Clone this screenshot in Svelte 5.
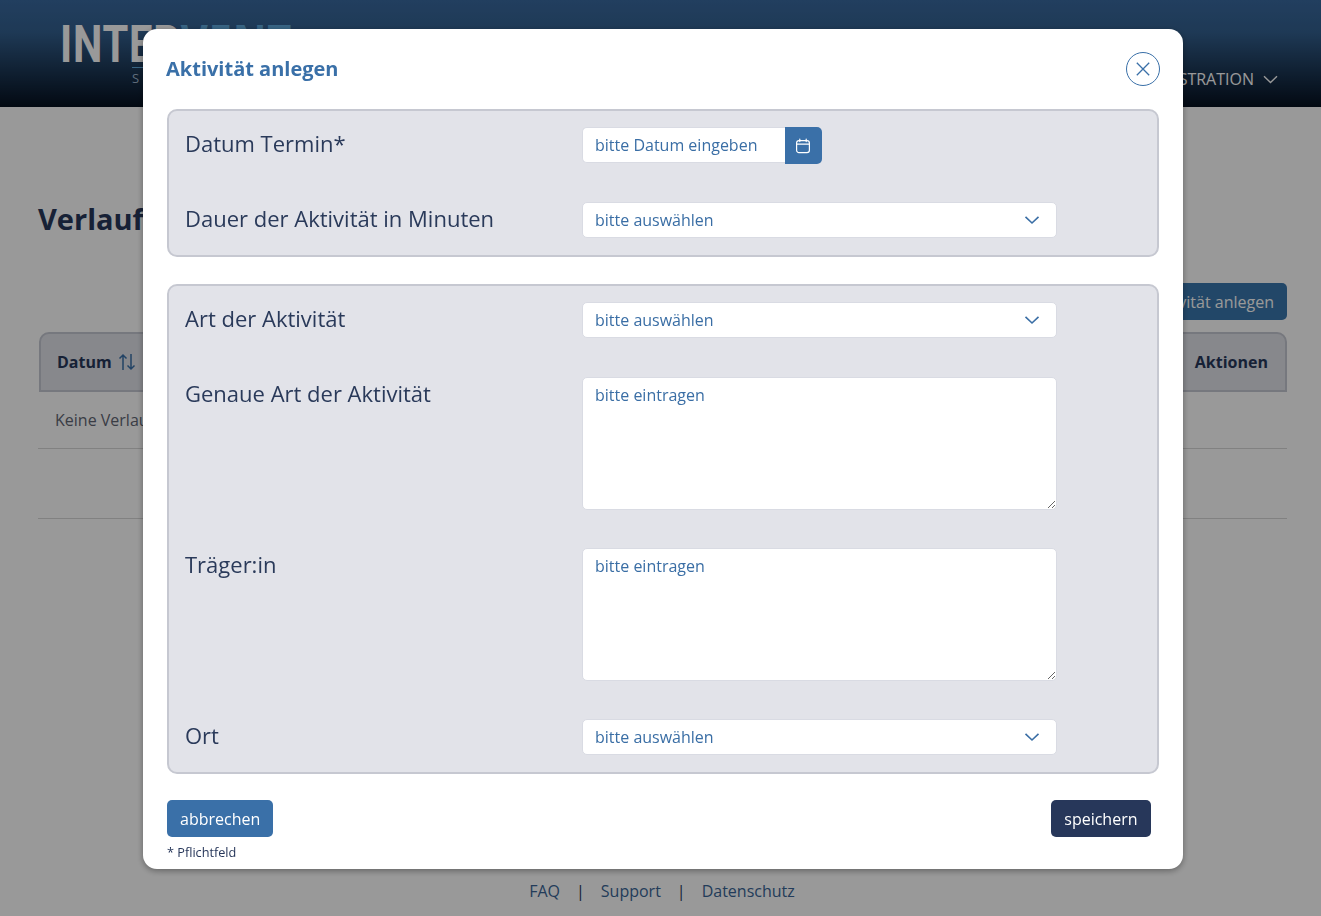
<script>
  const firstRows = [
    { label: 'Datum Termin*', kind: 'date' },
    { label: 'Dauer der Aktivität in Minuten', kind: 'select' }
  ];
  const secondRows = [
    { label: 'Art der Aktivität', kind: 'select' },
    { label: 'Genaue Art der Aktivität', kind: 'area' },
    { label: 'Träger:in', kind: 'area' },
    { label: 'Ort', kind: 'select' }
  ];
</script>

{#snippet row(r)}
  <div class="row">
    <label class="lbl">{r.label}</label>
    {#if r.kind === 'date'}
      <div class="date">
        <input class="ctl dateinput" placeholder="bitte Datum eingeben" />
        <button class="calbtn" aria-label="Kalender">
          <svg width="16" height="16" viewBox="0 0 16 16" fill="none" stroke="#fff" stroke-width="1.2" stroke-linecap="round">
            <rect x="1.6" y="2.6" width="12.8" height="12" rx="2.4" />
            <path d="M1.6 6.2h12.8M4.8 1v2.6M11.2 1v2.6" />
          </svg>
        </button>
      </div>
    {:else if r.kind === 'select'}
      <div class="selwrap">
        <select class="ctl sel"><option>bitte auswählen</option></select>
        <svg class="chev" width="16" height="10" viewBox="0 0 16 10" fill="none" stroke="#3a6ea5" stroke-width="1.6"><path d="M1.5 1.8 8 8l6.5-6.2" /></svg>
      </div>
    {:else}
      <textarea class="ctl area" placeholder="bitte eintragen"></textarea>
    {/if}
  </div>
{/snippet}

<div class="page">
  <header class="top">
    <div class="logo">
      <div class="word">INTER<span>VENT</span></div>
      <div class="sub">STATISTIK</div>
    </div>
    <nav class="nav">ADMINISTRATION
      <svg width="15" height="9" viewBox="0 0 15 9" fill="none" stroke="#fff" stroke-width="1.4"><path d="M1 1.2 7.5 7.6 14 1.2" /></svg>
    </nav>
  </header>

  <main class="content">
    <h1>Verlauf</h1>
    <div class="actions"><button class="new">Aktivität anlegen</button></div>
    <div class="thead">
      <span class="th">Datum
        <svg width="18" height="18" viewBox="0 0 18 18" fill="none" stroke="#3a70a8" stroke-width="1.5"><path d="M5 17V2M1.5 5.5 5 2l3.5 3.5M13 1v15M9.5 12.5 13 16l3.5-3.5" /></svg>
      </span>
      <span class="th">Aktionen</span>
    </div>
    <div class="trow">Keine Verlaufseinträge vorhanden</div>
    <div class="tpager"></div>
  </main>

  <footer class="foot">
    <div class="links"><a href="#faq">FAQ</a><i>|</i><a href="#support">Support</a><i>|</i><a href="#ds">Datenschutz</a></div>
    <div class="note">Gefördert durch das Bundesministerium</div>
  </footer>
</div>

<div class="overlay">
  <div class="modal">
    <div class="mhead">
      <h2>Aktivität anlegen</h2>
      <button class="close" aria-label="Schließen">
        <svg width="14" height="14" viewBox="0 0 14 14" fill="none" stroke="#3a70a8" stroke-width="1.3"><path d="M.8.8l12.4 12.4M13.2.8.8 13.2" /></svg>
      </button>
    </div>

    <section class="box first">
      {#each firstRows as r}{@render row(r)}{/each}
    </section>
    <section class="box second">
      {#each secondRows as r}{@render row(r)}{/each}
    </section>

    <div class="btns">
      <button class="btn blue">abbrechen</button>
      <button class="btn navy">speichern</button>
    </div>
    <div class="req">* Pflichtfeld</div>
  </div>
</div>

<style>
  :global(html), :global(body) { margin: 0; height: 916px; overflow: hidden; background: #fff; }
  * { box-sizing: border-box; font-family: "Open Sans", "Liberation Sans", sans-serif; }

  .page { height: 916px; overflow: hidden; display: flex; flex-direction: column; }

  .top {
    height: 107px; flex: none; display: flex; justify-content: space-between;
    padding: 23px 43px 0 60px;
    background: linear-gradient(180deg, #39699f 0%, #33608f 30%, #05101f 100%);
    color: #fff;
  }
  .word {
    font-family: "Liberation Sans Narrow", "Roboto", sans-serif; font-size: 52px; line-height: 38px;
    height: 38px; color: #fff; letter-spacing: 1px; font-weight: 700;
    transform: scaleX(0.8); transform-origin: left center; white-space: nowrap;
  }
  .word span { color: #5fa8dc; }
  .sub {
    margin: 6px 0 0 72px; padding-top: 3px; border-top: 1px solid #5fa8dc;
    width: 160px; font-size: 13px; letter-spacing: 5px; line-height: 14px; color: #9fb5cc;
  }
  .nav { display: flex; align-items: center; gap: 9px; height: 20px; margin-top: 46px; font-size: 16px; color: #fff; }

  .content { padding: 0 34px 0 38px; flex: 1; }
  h1 { margin: 91px 0 0; font-size: 29px; line-height: 42px; font-weight: 700; color: #27375a; }
  .actions { display: flex; justify-content: flex-end; margin-top: 43px; }
  .new { height: 37px; padding: 0 13px; border: 0; border-radius: 5px; background: #3a77ae; color: #fff; font-size: 16px; }
  .thead {
    margin: 12px 0 0 1px; height: 60px; display: flex; justify-content: space-between; align-items: center;
    padding: 0 17px 0 16px; background: #e1e3ea; border: 2px solid #c5c8d2; border-radius: 10px 10px 0 0;
  }
  .th { display: flex; align-items: center; gap: 6px; font-size: 16px; font-weight: 700; color: #27375a; }
  .trow { height: 57px; padding: 0 17px; display: flex; align-items: center; font-size: 16px; color: #5f6674; border-bottom: 1px solid #d7d7d7; }
  .tpager { height: 70px; border-bottom: 1px solid #d7d7d7; }

  .foot { height: 37px; margin-top: auto; text-align: center; padding-left: 3px; }
  .links { display: flex; justify-content: center; gap: 16px; font-size: 16px; line-height: 24px; }
  .links a { color: #3a6596; text-decoration: none; }
  .links i { font-style: normal; color: #27375a; }
  .note { margin-top: 21px; font-size: 14px; line-height: 20px; color: #3a6596; }

  .overlay { position: fixed; inset: 0; background: rgba(0, 0, 0, 0.4); display: flex; align-items: flex-start; justify-content: center; padding-top: 29px; padding-left: 5px; }
  .modal {
    width: 1040px; height: 840px; padding: 0 24px; background: #fff; border-radius: 14px;
    box-shadow: 0 2px 6px rgba(0, 0, 0, 0.35);
  }
  .mhead { height: 78px; margin-bottom: 2px; display: flex; justify-content: space-between; align-items: center; margin-left: -1px; }
  h2 { margin: 0; font-size: 20px; font-weight: 700; color: #3a70a8; }
  .close {
    width: 34px; height: 34px; margin: 2px -1px 0 0; border-radius: 50%; border: 1px solid #3a70a8; background: #fff;
    display: flex; align-items: center; justify-content: center; padding: 0;
  }
  .box {
    width: 992px; background: #e2e3e9; border: 2px solid #c6c8d1; border-radius: 10px;
    padding: 16px; display: flex; flex-direction: column;
  }
  .first { gap: 38px; height: 148px; }
  .second { margin-top: 27px; gap: 38px; height: 490px; }
  .row { display: flex; align-items: flex-start; }
  .lbl { width: 397px; flex: none; font-size: 22px; line-height: 32px; color: #2a3a5a; }
  .ctl {
    border: 1px solid #d9dbe3; border-radius: 5px; background: #fff; font-size: 16px; color: #3a6ea5;
    padding: 0 12px; outline: none; display: block;
  }
  .ctl::placeholder { color: #3a6ea5; opacity: 1; }
  .date { display: flex; }
  .dateinput { width: 203px; height: 36px; border-radius: 5px 0 0 5px; border-right: 0; }
  .calbtn {
    width: 37px; height: 37px; padding: 0 1px 0 0; border: 0; border-radius: 0 5px 5px 0; background: #3a70a8;
    display: flex; align-items: center; justify-content: center;
  }
  .selwrap { position: relative; width: 475px; height: 37px; }
  .sel { width: 475px; height: 36px; appearance: none; }
  .chev { position: absolute; right: 17px; top: 13px; pointer-events: none; }
  .area { width: 475px; height: 133px; padding-top: 6px; line-height: 22px; resize: vertical; }

  .btns { display: flex; justify-content: space-between; margin-top: 26px; padding-right: 8px; }
  .btn { height: 37px; padding: 0 13px; border: 0; border-radius: 5px; color: #fff; font-size: 16px; }
  .blue { background: #3a70a8; }
  .navy { background: #27375a; padding: 0 13.5px; }
  .req { margin-top: 7px; font-size: 12.7px; line-height: 16px; color: #27375a; }
</style>
